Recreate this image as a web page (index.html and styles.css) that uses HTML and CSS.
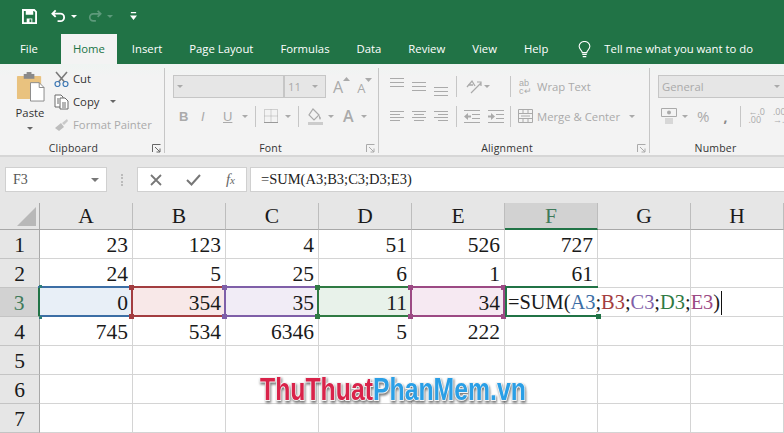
FILE: index.html
```html
<!DOCTYPE html>
<html lang="en">
<head>
    <meta charset="UTF-8">
    <title>Excel</title>
    <link rel="stylesheet" href="styles.css">
</head>
<body>
    <div class="titlebar">
        <svg class="qa save" width="15" height="15" viewBox="0 0 16 16"><path d="M1 1h12l2 2v12H1z" fill="none" stroke="#fff" stroke-width="2"/><path d="M4 2h8v4H4zM5 10h6v5H5z" fill="#fff"/><path d="M8 11h2v3H8z" fill="#217346"/></svg>
        <svg class="qa undo" width="15" height="14" viewBox="0 0 16 14"><path d="M5 1 1.500 4.500 5 8M2 4.500h8a3.800 3.800 0 0 1 0 8H7" fill="none" stroke="#fff" stroke-width="2"/></svg>
        <span class="caret white qa-caret"></span>
        <svg class="qa redo" width="14" height="14" viewBox="0 0 16 14"><path d="M11 1l3.500 3.500L11 8M14 4.500H6a3.800 3.800 0 0 0 0 8h3" fill="none" stroke="#5d9a7b" stroke-width="2"/></svg>
        <span class="caret dim qa-caret"></span>
        <svg class="qa custom" width="7" height="8" viewBox="0 0 8 9"><path d="M1 0h6v1.300H1zM0 4h8L4 9z" fill="#fff"/></svg>
    </div>

    <div class="tabs">
        <div class="tab file">File</div>
        <div class="tab active">Home</div>
        <div class="tab">Insert</div>
        <div class="tab">Page Layout</div>
        <div class="tab">Formulas</div>
        <div class="tab">Data</div>
        <div class="tab">Review</div>
        <div class="tab">View</div>
        <div class="tab">Help</div>
        <svg class="bulb" width="13" height="17" viewBox="0 0 14 19"><path d="M4.500 13c0-2.500-3.500-3.500-3.500-7a6 5.500 0 0 1 12 0c0 3.500-3.500 4.500-3.500 7z" fill="none" stroke="#fff" stroke-width="1.200"/><path d="M4.500 15h5M5 17.500h4" stroke="#fff" stroke-width="1.300"/></svg>
        <div class="tell">Tell me what you want to do</div>
    </div>

    <div class="ribbon">
        <section class="group clipboard">
            <div class="group-body clip-body">
                <div class="paste">
                    <svg width="29" height="31" viewBox="0 0 30 32"><rect x="1" y="4" width="25" height="24" rx="1" fill="#e9c27f"/><rect x="8" y="2" width="11" height="5" fill="#8a8a8a"/><rect x="11" y="0" width="5" height="3" fill="#8a8a8a"/><path d="M15 11h9l5 5v14H15z" fill="#fff" stroke="#8a8a8a"/><path d="M24 11v5h5" fill="none" stroke="#8a8a8a"/></svg>
                    <span>Paste</span>
                    <i class="caret"></i>
                </div>
                <div class="clip-list">
                    <div class="clip-row"><svg width="15" height="16" viewBox="0 0 15 16"><path d="M2 1l8.500 10M13 1 4.500 11" stroke="#7a7a7a" stroke-width="1.600"/><circle cx="3.500" cy="13" r="2.500" fill="none" stroke="#3d78b5" stroke-width="1.200"/><circle cx="11.500" cy="13" r="2.500" fill="none" stroke="#3d78b5" stroke-width="1.200"/></svg><span>Cut</span></div>
                    <div class="clip-row"><svg width="15" height="16" viewBox="0 0 15 16"><path d="M1 1h6l2 2v10H1z" fill="#fff" stroke="#6a6a6a"/><path d="M6 4h5l3 3v8H6z" fill="#fff" stroke="#6a6a6a"/><path d="M8 9h4M8 11h4M8 13h4M3 5h2M3 7h2M3 9h2" stroke="#6a6a6a"/></svg><span>Copy</span><i class="caret copy-caret"></i></div>
                    <div class="clip-row off"><svg width="15" height="16" viewBox="0 0 15 16"><path d="M1 11l6-5 3 4-5 4z" fill="#bdbdbd"/><path d="M8 6l5-4 1 2-4 4z" fill="#c9c9c9"/></svg><span>Format Painter</span></div>
                </div>
            </div>
            <div class="group-name">Clipboard<svg class="launcher" width="9" height="9" viewBox="0 0 9 9"><path d="M.5 8V.5H8.500M3 3l5 5M8 4.500V8H4.500" fill="none" stroke="#666"/></svg></div>
        </section>

        <section class="group font">
            <div class="group-body">
                <div class="row font-top">
                    <div class="combo font-name"><i class="caret"></i></div>
                    <div class="combo font-size">11<i class="caret"></i></div>
                    <span class="big-a">A<svg width="7" height="4" viewBox="0 0 7 4"><path d="M0 4l3.500-4L7 4z" fill="#aaa"/></svg></span>
                    <span class="small-a">A<svg width="7" height="4" viewBox="0 0 7 4"><path d="M0 0l3.500 4L7 0z" fill="#aaa"/></svg></span>
                </div>
                <div class="row font-bottom">
                    <b class="fmt">B</b>
                    <em class="fmt">I</em>
                    <u class="fmt">U</u>
                    <i class="caret under-caret"></i>
                    <span class="vsep"></span>
                    <svg class="borders" width="14" height="14" viewBox="0 0 14 14"><path d="M.5.500h13v13H.500zM7 .500v13M.500 7h13" fill="none" stroke="#aaa" stroke-dasharray="1 1"/><path d="M0 13.500h14" stroke="#999"/></svg>
                    <i class="caret"></i>
                    <span class="vsep"></span>
                    <svg class="fill" width="16" height="17" viewBox="0 0 16 17"><path d="M6 1l6 6-5 5-5-5z" fill="none" stroke="#aaa" stroke-width="1.200"/><path d="M12 7l2 3-1 2-1-2z" fill="#aaa"/><rect x="1" y="14" width="15" height="3" fill="#ccc"/></svg>
                    <i class="caret"></i>
                    <span class="color-a">A</span>
                    <i class="caret"></i>
                </div>
            </div>
            <div class="group-name">Font<svg class="launcher" width="9" height="9" viewBox="0 0 9 9"><path d="M.5 8V.5H8.500M3 3l5 5M8 4.500V8H4.500" fill="none" stroke="#aaa"/></svg></div>
        </section>

        <section class="group alignment">
            <div class="group-body">
                <div class="row align-row">
                    <svg class="lines top" width="14" height="9" viewBox="0 0 14 9"><path d="M0 .500h14M0 4.500h14M0 8.500h14" stroke="#aaa"/></svg>
                    <svg class="lines mid" width="14" height="9" viewBox="0 0 14 9"><path d="M0 .500h14M0 4.500h14M0 8.500h14" stroke="#aaa"/></svg>
                    <svg class="lines bot" width="14" height="9" viewBox="0 0 14 9"><path d="M0 .500h14M0 4.500h14M0 8.500h14" stroke="#aaa"/></svg>
                    <span class="vsep"></span>
                    <svg class="orient" width="17" height="17" viewBox="0 0 17 17"><path d="M2 9l5-6 3 5M3 7h5" fill="none" stroke="#aaa" stroke-width="1.300"/><path d="M6 15 16 5M12 4h4v4" fill="none" stroke="#aaa" stroke-width="1.200"/></svg>
                    <i class="caret"></i>
                    <span class="vsep wide"></span>
                    <span class="wrap-icon">ab<br>c↵</span>
                    <span class="off-label">Wrap Text</span>
                </div>
                <div class="row align-row second">
                    <svg class="lines left" width="14" height="11" viewBox="0 0 14 11"><path d="M0 .500h14M0 3.500h10M0 6.500h14M0 9.500h10" stroke="#aaa"/></svg>
                    <svg class="lines center" width="14" height="11" viewBox="0 0 14 11"><path d="M0 .500h14M2 3.500h10M0 6.500h14M2 9.500h10" stroke="#aaa"/></svg>
                    <svg class="lines right" width="14" height="11" viewBox="0 0 14 11"><path d="M0 .500h14M4 3.500h10M0 6.500h14M4 9.500h10" stroke="#aaa"/></svg>
                    <span class="vsep"></span>
                    <svg class="indent" width="16" height="13" viewBox="0 0 16 13"><path d="M0 .500h16M8 4.500h8M8 8.500h8M0 12.500h16" stroke="#aaa"/><path d="M0 6.500 4 3v7zM4 5.500h3v2H4z" fill="#aaa"/></svg>
                    <svg class="outdent" width="16" height="13" viewBox="0 0 16 13"><path d="M0 .500h16M8 4.500h8M8 8.500h8M0 12.500h16" stroke="#aaa"/><path d="M7 6.500 3 3v7zM0 5.500h3v2H0z" fill="#aaa"/></svg>
                    <span class="vsep wide"></span>
                    <svg class="merge" width="15" height="14" viewBox="0 0 15 14"><path d="M.5.500h14v13H.500zM.500 4.500h14M.500 9.500h14M5 .500v4M10 .500v4M5 9.500v4M10 9.500v4M3 7h9" fill="none" stroke="#aaa"/></svg>
                    <span class="off-label">Merge &amp; Center</span>
                    <i class="caret merge-caret"></i>
                </div>
            </div>
            <div class="group-name">Alignment<svg class="launcher" width="9" height="9" viewBox="0 0 9 9"><path d="M.5 8V.5H8.500M3 3l5 5M8 4.500V8H4.500" fill="none" stroke="#aaa"/></svg></div>
        </section>

        <section class="group number">
            <div class="group-body">
                <div class="row number-top"><div class="combo general">General<i class="caret"></i></div></div>
                <div class="row number-row">
                    <svg class="money" width="16" height="16" viewBox="0 0 16 16"><path d="M.5.500h15v8H.500z" fill="none" stroke="#aaa"/><circle cx="8" cy="4.500" r="2" fill="#aaa"/><path d="M4 11h8M4 13h8M4 15h8" stroke="#bbb"/></svg>
                    <i class="caret"></i>
                    <span class="percent">%</span>
                    <span class="comma">,</span>
                    <span class="vsep"></span>
                    <span class="dec">←.0<br>.00</span>
                    <span class="dec">.00<br>→.0</span>
                </div>
            </div>
            <div class="group-name">Number</div>
        </section>
    </div>

    <div class="formula-area">
        <div class="name-box">F3<i class="caret dark"></i></div>
        <div class="grip"></div>
        <div class="fx-box">
            <svg width="12" height="12" viewBox="0 0 12 12"><path d="M1 1l10 10M11 1 1 11" stroke="#777" stroke-width="1.800"/></svg>
            <svg width="15" height="12" viewBox="0 0 15 12"><path d="M1 6l4.500 4.500L14 1" fill="none" stroke="#777" stroke-width="2"/></svg>
            <span class="fx">f<small>x</small></span>
        </div>
        <div class="formula-input">=SUM(A3;B3;C3;D3;E3)</div>
    </div>

    <div class="sheet">
        <div class="corner"><span class="corner-tri"></span></div>
        <div class="col-h">A</div><div class="col-h">B</div><div class="col-h">C</div><div class="col-h">D</div><div class="col-h">E</div><div class="col-h sel">F</div><div class="col-h">G</div><div class="col-h">H</div>

        <div class="row-h">1</div>
        <div class="cell">23</div><div class="cell">123</div><div class="cell">4</div><div class="cell">51</div><div class="cell">526</div><div class="cell">727</div><div class="cell"></div><div class="cell"></div>

        <div class="row-h">2</div>
        <div class="cell">24</div><div class="cell">5</div><div class="cell">25</div><div class="cell">6</div><div class="cell">1</div><div class="cell">61</div><div class="cell"></div><div class="cell"></div>

        <div class="row-h sel">3</div>
        <div class="cell ref blue">0</div><div class="cell ref red">354</div><div class="cell ref purple">35</div><div class="cell ref green">11</div><div class="cell ref pink">34</div>
        <div class="cell editing">=SUM(<span class="t-blue">A3</span>;<span class="t-red">B3</span>;<span class="t-purple">C3</span>;<span class="t-green">D3</span>;<span class="t-pink">E3</span>)<span class="cursor"></span></div>
        <div class="cell"></div><div class="cell"></div>

        <div class="row-h">4</div>
        <div class="cell">745</div><div class="cell">534</div><div class="cell">6346</div><div class="cell">5</div><div class="cell">222</div><div class="cell"></div><div class="cell"></div><div class="cell"></div>

        <div class="row-h">5</div>
        <div class="cell"></div><div class="cell"></div><div class="cell"></div><div class="cell"></div><div class="cell"></div><div class="cell"></div><div class="cell"></div><div class="cell"></div>
        <div class="row-h">6</div>
        <div class="cell"></div><div class="cell"></div><div class="cell"></div><div class="cell"></div><div class="cell"></div><div class="cell"></div><div class="cell"></div><div class="cell"></div>
        <div class="row-h">7</div>
        <div class="cell"></div><div class="cell"></div><div class="cell"></div><div class="cell"></div><div class="cell"></div><div class="cell"></div><div class="cell"></div><div class="cell"></div>

        <div class="watermark"><span class="wm-red">ThuThuat</span><span class="wm-blue">PhanMem.vn</span></div>
    </div>
</body>
</html>
```

FILE: styles.css
```css
* {
    box-sizing: border-box;
}
html, body {
    margin: 0;
    height: 433px;
    overflow: hidden;
}
body {
    width: 784px;
    background: #e6e6e6;
    font-family: "Open Sans", "Noto Sans", sans-serif;
    font-size: 11.300px;
    color: #333;
    white-space: nowrap;
}
svg {
    display: block;
    flex: none;
}

/* title row */
.titlebar {
    height: 34px;
    background: #217346;
    display: flex;
    align-items: center;
    padding: 0 0 2px 22px;
}
.qa-caret {
    margin-left: 5px;
}
.undo {
    margin-left: 14px;
}
.redo {
    margin-left: 11px;
}
.custom {
    margin-left: 17px;
}
.caret {
    display: inline-block;
    flex: none;
    width: 0;
    height: 0;
    border-left: 3px solid transparent;
    border-right: 3px solid transparent;
    border-top: 3px solid #aaa;
}
.caret.white {
    border-top-color: #fff;
}
.caret.dim {
    border-top-color: #5d9a7b;
}
.caret.dark {
    border-left-width: 4px;
    border-right-width: 4px;
    border-top-width: 4px;
    border-top-color: #777;
}

/* tabs */
.tabs {
    height: 30px;
    background: #217346;
    display: flex;
    gap: 3px;
    padding-left: 8px;
    color: #fff;
}
.tab {
    padding: 0 12px;
    line-height: 29px;
}
.tab.active {
    background: #f3f3f3;
    color: #217346;
    margin-left: 8px;
}
.bulb {
    margin: 7px 0 0 15px;
}
.tell {
    margin-left: 10px;
    line-height: 29px;
}

/* ribbon */
.ribbon {
    height: 93px;
    background: linear-gradient(#eff4f2, #f3f3f3 12px);
    border-bottom: 2px solid #d6d6d6;
    display: flex;
    padding-top: 4px;
}
.group {
    flex: none;
    height: 85px;
    border-right: 1px solid #c6c6c6;
    position: relative;
}
.clipboard {
    width: 165px;
}
.font {
    width: 214px;
}
.alignment {
    width: 271px;
}
.number {
    width: 134px;
    border-right: 0;
}
.group-body {
    height: 72px;
}
.group-name {
    text-align: center;
    font-size: 10.500px;
    line-height: 16px;
    letter-spacing: .2px;
}
.clipboard .group-name {
    padding-right: 17px;
}
.font .group-name {
    padding-right: 2px;
}
.alignment .group-name {
    padding-right: 14px;
}
.number .group-name {
    padding-right: 3px;
}
.launcher {
    position: absolute;
    right: 3px;
    bottom: 0;
}
.row {
    display: flex;
    align-items: center;
}
.vsep {
    flex: none;
    width: 1px;
    height: 21px;
    background: #c6c6c6;
}

/* clipboard */
.clip-body {
    display: flex;
}
.paste {
    width: 38px;
    padding-top: 4px;
    display: flex;
    flex-direction: column;
    align-items: center;
    margin-left: 11px;
    line-height: 14px;
    align-self: flex-start;
}
.paste svg {
    margin-bottom: 3px;
}
.paste .caret {
    border-top-color: #666;
    margin-top: 7px;
}
.clip-list {
    margin: -1px 0 0 5px;
}
.clip-row {
    height: 23px;
    display: flex;
    align-items: center;
    gap: 4px;
}
.clip-row.off {
    color: #aaa;
}
.copy-caret {
    margin-left: 7px;
    border-top-color: #666;
}

/* font */
.font-top {
    padding: 7px 0 0 8px;
}
.combo {
    height: 23px;
    background: #e6e6e6;
    border: 1px solid #c6c6c6;
    color: #aaa;
    display: flex;
    align-items: center;
    justify-content: space-between;
    padding: 0 7px 0 3px;
}
.font-name {
    width: 111px;
}
.font-size {
    width: 42px;
}
.big-a {
    display: flex;
    color: #aaa;
    font-size: 16px;
    margin-left: 7px;
    line-height: 20px;
}
.small-a {
    display: flex;
    color: #aaa;
    font-size: 13px;
    margin-left: 7px;
    line-height: 20px;
    padding-top: 2px;
}
.font-bottom {
    padding-left: 14px;
    height: 36px;
}
.fmt {
    width: 22px;
    flex: none;
    color: #aaa;
    font-family: "Liberation Sans", sans-serif;
    font-size: 13px;
}
.font-bottom .caret {
    margin-left: 7px;
}
.font-bottom .under-caret {
    margin-left: -3px;
}
.font-bottom .vsep {
    margin: 0 8px 0 7px;
}
.font-bottom .caret + .vsep + .fill {
    margin-left: 0;
}
.font-bottom .fill + .caret {
    margin-left: 5px;
    margin-right: 9px;
}
.color-a {
    flex: none;
    color: #aaa;
    font-size: 16px;
    font-weight: 600;
}

/* alignment */
.align-row {
    height: 30px;
    padding: 7px 0 0 11px;
    gap: 8px;
}
.align-row.second {
    height: 36px;
    padding-top: 0;
}
.lines.top {
    margin-top: -9px;
}
.lines.bot {
    margin-top: 9px;
}
.align-row .vsep.wide {
    margin-left: 12px;
}
.align-row .orient + .caret {
    margin-left: -6px;
}
.align-row .indent {
    margin-left: -1px;
}
.align-row .outdent + .vsep {
    margin-left: -2px;
}
.align-row .merge {
    margin-left: -1px;
}
.wrap-icon {
    flex: none;
    color: #aaa;
    font-family: "Liberation Sans", sans-serif;
    font-size: 9px;
    line-height: 8px;
    width: 14px;
}
.off-label {
    color: #aaa;
    margin-left: -4px;
}
.merge-caret {
    margin-left: 1px;
}

/* number */
.number-top {
    padding: 7px 0 0 8px;
}
.general {
    width: 130px;
    flex: none;
}
.number-row {
    height: 36px;
    padding-left: 11px;
    gap: 5px;
}
.percent {
    color: #aaa;
    font-size: 15px;
    margin-left: 4px;
}
.comma {
    color: #888;
    font-weight: 700;
    font-size: 14px;
    margin: 0 8px 0 9px;
}
.dec {
    color: #aaa;
    font-size: 9px;
    line-height: 8px;
    margin-left: 2px;
}
.dec + .dec {
    margin-left: 3px;
}

/* formula bar */
.formula-area {
    height: 46px;
    padding: 10px 0 11px 5px;
    display: flex;
    background: #e6e6e6;
}
.name-box {
    width: 102px;
    background: #fff;
    border: 1px solid #d0d0d0;
    display: flex;
    align-items: center;
    justify-content: space-between;
    padding: 0 7px;
    font-family: "Liberation Serif", serif;
    font-size: 14px;
    color: #555;
}
.grip {
    width: 2px;
    margin: 7px 14px 6px 14px;
    border-left: 2px dotted #bbb;
}
.fx-box {
    width: 110px;
    background: #fff;
    border: 1px solid #d0d0d0;
    display: flex;
    align-items: center;
    justify-content: space-between;
    padding: 0 11px 0 12px;
}
.fx {
    font-family: "Liberation Serif", serif;
    font-style: italic;
    font-size: 15px;
    color: #666;
}
.fx small {
    font-size: 11px;
}
.formula-input {
    flex: 1;
    margin-left: 3px;
    background: #fff;
    border: 1px solid #d0d0d0;
    border-right: 0;
    font-family: "Liberation Serif", serif;
    font-size: 14.500px;
    line-height: 23px;
    padding-left: 10px;
    color: #222;
}

/* sheet */
.sheet {
    position: relative;
    display: grid;
    grid-template-columns: 40px repeat(8, 93px);
    grid-template-rows: 27px repeat(7, 29px);
    background: #fff;
    font-family: "Liberation Serif", serif;
    font-size: 21.500px;
    color: #1a1a1a;
}
.corner {
    background: #e6e6e6;
    border-right: 1px solid #a8a8a8;
    border-bottom: 1px solid #a8a8a8;
    position: relative;
}
.corner-tri {
    position: absolute;
    right: 3px;
    bottom: 3px;
    border-left: 19px solid transparent;
    border-bottom: 19px solid #b8b8b8;
}
.col-h {
    background: #e6e6e6;
    border-right: 1px solid #bdbdbd;
    border-bottom: 1px solid #a8a8a8;
    text-align: center;
    line-height: 27px;
}
.col-h.sel {
    background: #d2d2d2;
    color: #3f7a5a;
    border-bottom: 2px solid #217346;
}
.row-h {
    background: #e6e6e6;
    border-right: 1px solid #a8a8a8;
    border-bottom: 1px solid #c4c4c4;
    text-align: center;
    line-height: 30px;
}
.row-h.sel {
    background: #d2d2d2;
    color: #3f7a5a;
    border-right: 2px solid #217346;
    position: relative;
    z-index: 3;
}
.cell {
    border-right: 1px solid #d4d4d4;
    border-bottom: 1px solid #d4d4d4;
    text-align: right;
    line-height: 30px;
    padding-right: 4px;
    position: relative;
}

/* coloured ranges of the formula */
.ref {
    margin: -2px 0 0 -2px;
    outline: 2px solid var(--c);
    outline-offset: -2px;
    border: 0;
    line-height: 35px;
    padding-right: 5px;
    z-index: 1;
}
.ref::before,
.ref::after {
    content: "";
    position: absolute;
    left: -2px;
    width: 5px;
    height: 5px;
    background: var(--c);
}
.ref::before {
    top: -1px;
}
.ref::after {
    bottom: -2px;
}
.blue {
    --c: #3c6ea5;
    background: #e8eff7;
}
.blue::before,
.blue::after {
    left: 1px;
    width: 3px;
    height: 3px;
    background: #2e7d78;
}
.red {
    --c: #a33d40;
    background: #f8e8e8;
}
.purple {
    --c: #7f5fa8;
    background: #f1ecf6;
}
.green {
    --c: #2f7a43;
    background: #e8f2ea;
}
.pink {
    --c: #9c4a84;
    background: #f6e9f2;
}
.pink::before,
.pink::after {
    box-shadow: 93px 0 0 var(--c);
}
.editing {
    margin-top: -2px;
    text-align: left;
    padding: 0 0 0 3px;
    line-height: 32px;
    font-size: 20.400px;
    z-index: 2;
    border: 0;
    box-shadow: inset 0 2px #217346, inset 0 -2px #217346, inset 2px 0 #217346;
    width: 93px;
}
.editing::after {
    content: "";
    position: absolute;
    right: -3px;
    bottom: -2px;
    width: 5px;
    height: 5px;
    background: #217346;
}
.t-blue {
    color: #3c6ea5;
}
.t-red {
    color: #a33d40;
}
.t-purple {
    color: #7f5fa8;
}
.t-green {
    color: #2f7a43;
}
.t-pink {
    color: #9c4a84;
}
.cursor {
    display: inline-block;
    width: 1px;
    height: 24px;
    background: #111;
    vertical-align: -6px;
    margin-left: 1px;
}

.watermark {
    position: absolute;
    left: 260px;
    top: 169px;
    z-index: 4;
    font-family: "Liberation Sans", sans-serif;
    font-weight: 700;
    font-size: 31px;
    line-height: 36px;
    transform-origin: left center;
    transform: scaleX(0.8);
    -webkit-text-stroke: 2px #f4f4f4;
    paint-order: stroke fill;
    filter: drop-shadow(1px 2px 1px rgba(50, 50, 50, 0.65));
}
.wm-red {
    color: #d9234a;
}
.wm-blue {
    color: #2a9fe6;
}
```
